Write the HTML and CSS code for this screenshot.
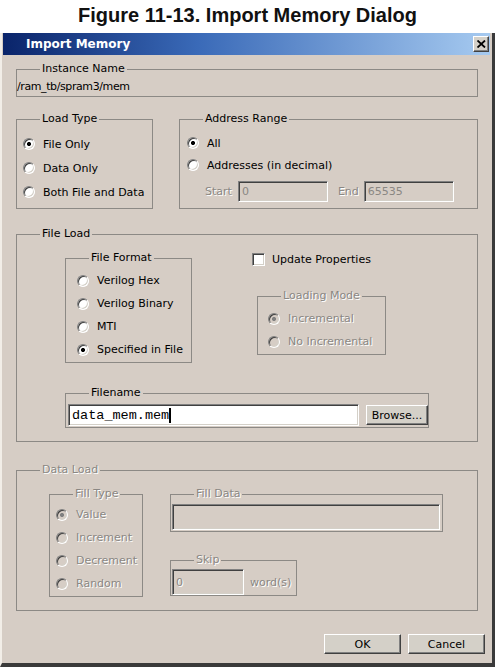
FILE: index.html
```html
<!DOCTYPE html>
<html>
<head>
<meta charset="utf-8">
<title>Import Memory Dialog</title>
<link rel="stylesheet" href="styles.css">
</head>
<body>
<h1 class="fig-title">Figure 11-13. Import Memory Dialog</h1>
<div class="window">
  <div class="titlebar">
    <span class="title-text">Import Memory</span>
    <span class="close-btn"><svg width="9" height="8" viewBox="0 0 9 8"><path d="M0.5 0.5 L8 7.5 M8 0.5 L0.5 7.5" stroke="#000" stroke-width="1.8" fill="none"/></svg></span>
  </div>
  <div class="client">
    <fieldset class="grp instance">
      <legend>Instance Name</legend>
      <div class="instance-path">/ram_tb/spram3/mem</div>
    </fieldset>

    <div class="row2">
      <fieldset class="grp load-type">
        <legend>Load Type</legend>
        <div class="opts lt-opts">
          <div class="opt"><span class="radio checked"></span><span>File Only</span></div>
          <div class="opt"><span class="radio"></span><span>Data Only</span></div>
          <div class="opt"><span class="radio"></span><span>Both File and Data</span></div>
        </div>
      </fieldset>
      <fieldset class="grp addr-range">
        <legend>Address Range</legend>
        <div class="opts ar-opts">
          <div class="opt opt22"><span class="radio checked"></span><span>All</span></div>
          <div class="opt opt22"><span class="radio"></span><span>Addresses (in decimal)</span></div>
          <div class="range-row">
            <span class="dis-text">Start</span>
            <span class="field dis start-field">0</span>
            <span class="dis-text end-label">End</span>
            <span class="field dis end-field">65535</span>
          </div>
        </div>
      </fieldset>
    </div>

    <fieldset class="grp file-load">
      <legend>File Load</legend>
      <div class="fl-inner">
        <div class="fl-top">
          <fieldset class="grp file-format">
            <legend>File Format</legend>
            <div class="opts ff-opts">
              <div class="opt opt23"><span class="radio"></span><span>Verilog Hex</span></div>
              <div class="opt opt23"><span class="radio"></span><span>Verilog Binary</span></div>
              <div class="opt opt23"><span class="radio"></span><span>MTI</span></div>
              <div class="opt opt23"><span class="radio checked"></span><span>Specified in File</span></div>
            </div>
          </fieldset>
          <div class="fl-right">
            <div class="check-row"><span class="checkbox"></span><span>Update Properties</span></div>
            <fieldset class="grp loading-mode disabled">
              <legend>Loading Mode</legend>
              <div class="opts lm-opts">
                <div class="opt opt23"><span class="radio checked"></span><span>Incremental</span></div>
                <div class="opt opt23"><span class="radio"></span><span>No Incremental</span></div>
              </div>
            </fieldset>
          </div>
        </div>
        <fieldset class="grp filename">
          <legend>Filename</legend>
          <div class="fn-row">
            <span class="field fn-field"><span class="mono">data_mem.mem</span><span class="caret"></span></span>
            <span class="btn browse-btn">Browse...</span>
          </div>
        </fieldset>
      </div>
    </fieldset>

    <fieldset class="grp data-load disabled">
      <legend>Data Load</legend>
      <div class="dl-inner">
        <fieldset class="grp fill-type">
          <legend>Fill Type</legend>
          <div class="opts ft-opts">
            <div class="opt opt23"><span class="radio checked"></span><span>Value</span></div>
            <div class="opt opt23"><span class="radio"></span><span>Increment</span></div>
            <div class="opt opt23"><span class="radio"></span><span>Decrement</span></div>
            <div class="opt opt23"><span class="radio"></span><span>Random</span></div>
          </div>
        </fieldset>
        <div class="dl-right">
          <fieldset class="grp fill-data">
            <legend>Fill Data</legend>
            <div class="fd-inner"><span class="field dis fd-field"></span></div>
          </fieldset>
          <fieldset class="grp skip">
            <legend>Skip</legend>
            <div class="skip-inner">
              <span class="field dis skip-field">0</span>
              <span class="words">word(s)</span>
            </div>
          </fieldset>
        </div>
      </div>
    </fieldset>

    <div class="buttons">
      <span class="btn dlg-btn">OK</span>
      <span class="btn dlg-btn">Cancel</span>
    </div>
  </div>
</div>
</body>
</html>
```

FILE: styles.css
```css
* { box-sizing: border-box; }

body {
  margin: 0;
  background: #ffffff;
  font-family: "DejaVu Sans", "Noto Sans", sans-serif;
  font-size: 11px;
  color: #000;
}

.fig-title {
  margin: 0;
  height: 33px;
  text-align: center;
  font: bold 20px/31px "Liberation Sans", Arial, sans-serif;
  color: #111;
  overflow: hidden;
}

.window {
  width: 495px;
  height: 634px;
  background: #d6cdc5;
  border-left: 2px solid #f2eee8;
  border-right: 3px solid #3a3a3a;
  border-bottom: 4px solid #3a3a3a;
}

.titlebar {
  height: 22px;
  margin: 0 2px 0 1px;
  background: linear-gradient(90deg, #0a246a 0%, #3a6ab8 40%, #a6caf0 100%);
  display: flex;
  align-items: center;
  justify-content: space-between;
  padding-left: 23px;
  padding-right: 1px;
}

.title-text {
  color: #fff;
  font-weight: bold;
  font-size: 12px;
}

.close-btn {
  width: 16px;
  height: 16px;
  background: #d4d0c8;
  border: 1px solid;
  border-color: #fff #404040 #404040 #fff;
  box-shadow: inset -1px -1px 0 #808080;
  display: flex;
  align-items: center;
  justify-content: center;
}

.client {
  padding: 7px 0 0 14px;
}

/* group boxes */
.grp {
  margin: 0;
  padding: 0;
  min-width: 0;
  border: 1px solid #8c8985;
}

.grp > legend {
  margin-left: 23px;
  padding: 0 2px;
  line-height: 14px;
}

.instance { width: 462px; }

.instance-path {
  line-height: 14px;
  padding: 4px 0 2px 0;
  letter-spacing: -0.4px;
}

.row2 {
  display: flex;
  gap: 26px;
  margin-top: 15px;
  width: 462px;
}

.load-type { width: 137px; }
.addr-range { width: 299px; }

.opt {
  display: flex;
  align-items: center;
  gap: 8px;
  height: 24px;
}
.opt22 { height: 22px; }
.opt23 { height: 23px; }

.lt-opts { padding: 6px 0 4px 6px; }
.ar-opts { padding: 6px 0 6px 7px; }

.radio {
  width: 12px;
  height: 12px;
  flex: none;
  border-radius: 50%;
  border: 1px solid;
  border-color: #808080 #ffffff #ffffff #808080;
  box-shadow: inset 1px 1px 0 #404040, inset -1px -1px 0 #d4d0c8;
  background: #fff;
}
.radio.checked {
  background: radial-gradient(circle, #000 0 1.8px, #fff 2.3px);
}

.range-row {
  display: flex;
  align-items: center;
  height: 21px;
  margin-top: 5px;
  padding-left: 18px;
}

.dis-text {
  color: #8a8783;
  text-shadow: 1px 1px 0 #fff;
}

.field {
  display: flex;
  align-items: center;
  border: 1px solid;
  border-color: #808080 #ffffff #ffffff #808080;
  box-shadow: inset 1px 1px 0 #404040, inset -1px -1px 0 #d4d0c8;
}
.field.dis {
  color: #8a8783;
  padding-left: 3px;
  background: transparent;
}

.start-field { width: 90px; height: 21px; margin-left: 6px; }
.end-label { margin-left: 10px; }
.end-field { width: 90px; height: 21px; margin-left: 5px; }

.file-load {
  width: 462px;
  margin-top: 18px;
}
.fl-inner { padding: 10px 0 13px 48px; }

.fl-top { display: flex; }

.file-format { width: 127px; }
.ff-opts { padding: 4px 0 1px 11px; }

.fl-right {
  margin-left: 60px;
}

.check-row {
  display: flex;
  align-items: center;
  gap: 7px;
  height: 17px;
}

.checkbox {
  width: 13px;
  height: 13px;
  border: 1px solid;
  border-color: #808080 #ffffff #ffffff #808080;
  box-shadow: inset 1px 1px 0 #404040, inset -1px -1px 0 #d4d0c8;
  background: #fff;
}

.loading-mode {
  width: 129px;
  margin-top: 21px;
  margin-left: 5px;
}
.lm-opts { padding: 4px 0 1px 10px; }

.disabled, .disabled legend, .disabled .opt {
  color: #8a8783;
  text-shadow: 1px 1px 0 #fff;
}
.disabled .radio {
  background: #d6cdc5;
}
.disabled .radio.checked {
  background: radial-gradient(circle, #808080 0 1.8px, #d6cdc5 2.3px);
}

.filename {
  width: 364px;
  margin-top: 23px;
}
.fn-row {
  display: flex;
  align-items: center;
  padding: 4px 0 1px 2px;
}
.fn-field {
  width: 291px;
  height: 22px;
  background: #fff;
  padding-left: 3px;
}
.mono {
  font-family: "Liberation Mono", "Courier New", monospace;
  font-size: 13.5px;
}
.caret {
  width: 2px;
  height: 15px;
  background: #000;
}

.btn {
  display: flex;
  align-items: center;
  justify-content: center;
  background: #d4d0c8;
  border: 1px solid;
  border-color: #ffffff #404040 #404040 #ffffff;
  box-shadow: inset -1px -1px 0 #808080;
}
.browse-btn {
  width: 62px;
  height: 20px;
  margin-left: 7px;
}

.data-load {
  width: 462px;
  margin-top: 21px;
}
.dl-inner {
  display: flex;
  padding: 10px 0 13px 32px;
}
.fill-type { width: 94px; }
.ft-opts { padding: 2px 0 1px 6px; }

.dl-right { margin-left: 27px; }

.fill-data { width: 273px; }
.fd-inner { padding: 3px 0 1px 1px; }
.fd-field { width: 268px; height: 26px; }

.skip {
  width: 127px;
  margin-top: 21px;
}
.skip-inner {
  display: flex;
  align-items: center;
  padding: 2px 0 0 1px;
}
.skip-field { width: 72px; height: 26px; }
.words { margin-left: 6px; }

.buttons {
  width: 469px;
  margin-top: 23px;
  display: flex;
  justify-content: flex-end;
  gap: 7px;
}
.dlg-btn {
  width: 77px;
  height: 20px;
}
```
